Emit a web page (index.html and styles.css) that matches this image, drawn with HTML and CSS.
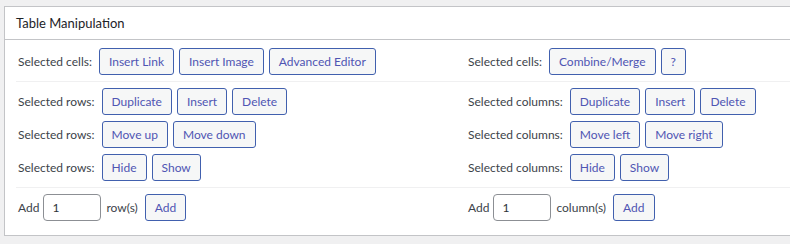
FILE: index.html
```html
<!DOCTYPE html>
<html lang="en">
<head>
<meta charset="utf-8">
<title>Table Manipulation</title>
<link rel="stylesheet" href="styles.css">
</head>
<body>
<div class="postbox">
  <h2 class="hndle">Table Manipulation</h2>
  <div class="inside">
    <div class="section first">
      <div class="cell">
        <span class="label">Selected cells:</span>
        <button class="btn">Insert Link</button>
        <button class="btn">Insert Image</button>
        <button class="btn">Advanced Editor</button>
      </div>
      <div class="cell">
        <span class="label">Selected cells:</span>
        <button class="btn">Combine/Merge</button>
        <button class="btn">?</button>
      </div>
    </div>
    <div class="section">
      <div class="cell">
        <span class="label">Selected rows:</span>
        <button class="btn">Duplicate</button>
        <button class="btn">Insert</button>
        <button class="btn">Delete</button>
      </div>
      <div class="cell">
        <span class="label">Selected columns:</span>
        <button class="btn">Duplicate</button>
        <button class="btn">Insert</button>
        <button class="btn">Delete</button>
      </div>
      <div class="cell">
        <span class="label">Selected rows:</span>
        <button class="btn">Move up</button>
        <button class="btn">Move down</button>
      </div>
      <div class="cell">
        <span class="label">Selected columns:</span>
        <button class="btn">Move left</button>
        <button class="btn">Move right</button>
      </div>
      <div class="cell">
        <span class="label">Selected rows:</span>
        <button class="btn">Hide</button>
        <button class="btn">Show</button>
      </div>
      <div class="cell">
        <span class="label">Selected columns:</span>
        <button class="btn">Hide</button>
        <button class="btn">Show</button>
      </div>
    </div>
    <div class="section last">
      <div class="cell add">
        <span class="label">Add</span>
        <input class="num" type="text" value="1">
        <span class="unit">row(s)</span>
        <button class="btn">Add</button>
      </div>
      <div class="cell add">
        <span class="label">Add</span>
        <input class="num" type="text" value="1">
        <span class="unit">column(s)</span>
        <button class="btn">Add</button>
      </div>
    </div>
  </div>
</div>
</body>
</html>
```
FILE: styles.css
```css
html, body {
  margin: 0;
  padding: 0;
  background: #f0f0f1;
  overflow: hidden;
}
body {
  font-family: "Lato", "Noto Sans", sans-serif;
  font-size: 12px;
  color: #3c434a;
}
.postbox {
  margin: 6px 0 0 4px;
  width: 830px;
  background: #fff;
  border: 1px solid #c3c4c7;
  box-sizing: border-box;
}
.hndle {
  margin: 0;
  height: 32px;
  line-height: 33px;
  padding: 0 11px;
  font-size: 13px;
  font-weight: 400;
  color: #1d2327;
  border-bottom: 1px solid #c3c4c7;
}
.inside {
  padding: 0 11px 8px;
}
.section {
  display: grid;
  grid-template-columns: 450px 1fr;
  padding: 3px 0;
  border-top: 1px solid #f0f0f1;
}
.section.first {
  border-top: 0;
  padding-top: 5px;
}
.cell {
  display: flex;
  align-items: center;
  gap: 5px;
  padding: 3px 2px;
}
.label {
  margin-right: 2px;
}
.btn {
  font-family: inherit;
  font-size: 12px;
  height: 27px;
  padding: 0 9px;
  background: #f6f7f7;
  color: #4f55b3;
  border: 1px solid #4160ae;
  border-radius: 3px;
  cursor: pointer;
}
.add {
  gap: 4px;
}
.add .label {
  margin-right: 0;
}
.num {
  width: 58px;
  height: 27px;
  box-sizing: border-box;
  border: 1px solid #8c8f94;
  border-radius: 4px;
  padding: 0 8px;
  font-family: inherit;
  font-size: 12px;
  color: #2c3338;
}
.unit {
  margin: 0 3px 0 1px;
}
```
